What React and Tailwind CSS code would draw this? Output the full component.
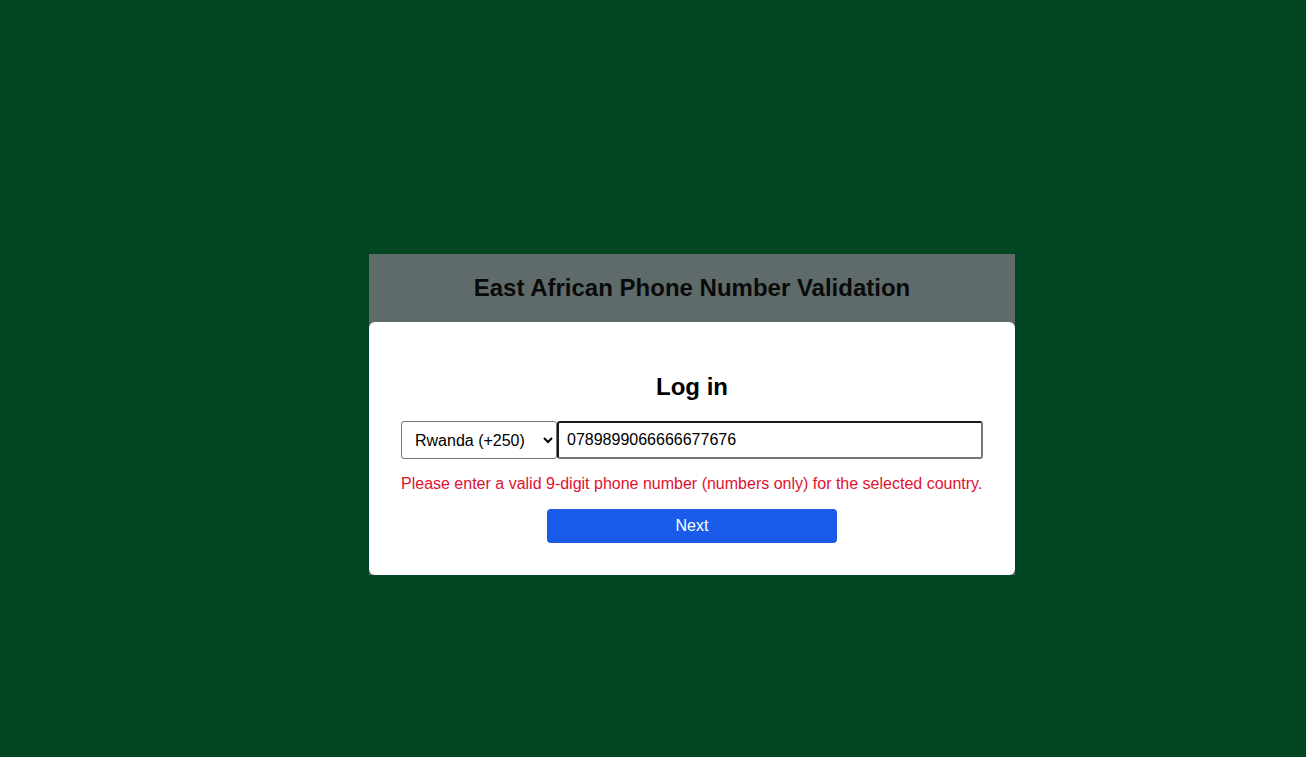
import React, { useState } from 'react';

const countries = [
  { code: '+250', name: 'Rwanda' },
  { code: '+254', name: 'Kenya' },
  { code: '+255', name: 'Tanzania' },
  { code: '+256', name: 'Uganda' },
  { code: '+257', name: 'Burundi' },
];

const App = () => {
  const [country, setCountry] = useState('+250');
  const [phone, setPhone] = useState('0789899066666677676');
  const valid = /^\d{9}$/.test(phone);

  return (
    <div className="min-h-screen bg-[#034624] pl-[369px] pt-[254px] font-['Liberation_Sans',Arial,sans-serif] text-black">
      <div className="w-[646px] bg-[#5f6a6b]">
        <h1 className="h-[68px] flex items-center justify-center text-2xl font-bold text-[#0a0a0a]">
          East African Phone Number Validation
        </h1>

        <div className="bg-white rounded-md px-8 pt-[49px] pb-8">
          <h2 className="text-center text-2xl leading-8 font-bold">Log in</h2>

          <div className="flex mt-[18px]">
            <select
              value={country}
              onChange={(e) => setCountry(e.target.value)}
              className="w-[156px] h-[38px] border border-[#767676] rounded-[3px] pl-[9px] pr-1 text-base bg-white"
            >
              {countries.map((c) => (
                <option key={c.code} value={c.code}>
                  {c.name} ({c.code})
                </option>
              ))}
            </select>
            <input
              value={phone}
              onChange={(e) => setPhone(e.target.value)}
              className="flex-1 h-[38px] border-2 border-t-[#1a1a1a] border-l-[#1a1a1a] border-r-[#767676] border-b-[#767676] rounded-[3px] px-2 text-base outline-none"
            />
          </div>

          {!valid && (
            <p className="mt-[16px] text-base leading-[18px] text-[#e1112f]">
              Please enter a valid 9-digit phone number (numbers only) for the selected country.
            </p>
          )}

          <div className="flex justify-center mt-[16px]">
            <button className="w-[290px] h-[34px] rounded bg-[#1a5ce9] text-white text-base">
              Next
            </button>
          </div>
        </div>
      </div>
    </div>
  );
};

export default App;
